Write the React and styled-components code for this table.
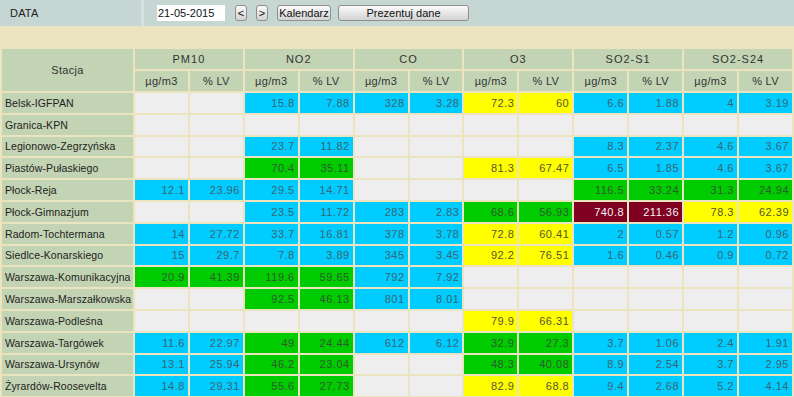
import React from "react";
import styled, { createGlobalStyle } from "styled-components";

const GlobalStyle = createGlobalStyle`
  html, body {
    margin: 0;
    padding: 0;
    background: #ece4bf;
    font-family: "Liberation Sans", Arial, sans-serif;
  }
`;

const TopBar = styled.div`
  display: flex;
  height: 26px;
  background-color: #c6d6d3;
`;
const LabelCell = styled.div`
  width: 144px;
  display: flex;
  align-items: center;
  padding-left: 10px;
  box-sizing: border-box;
  font-size: 11px;
  letter-spacing: 0.2px;
  color: #222;
  border-right: 3px solid #d6e2df;
`;
const ControlsCell = styled.div`
  display: flex;
  align-items: center;
  padding-left: 13px;
`;
const DateInput = styled.div`
  width: 68px;
  height: 16px;
  background: #fff;
  font-size: 11px;
  line-height: 16px;
  padding-left: 1px;
  box-sizing: border-box;
  color: #111;
  margin-right: 10px;
`;
const Button = styled.div`
  height: 16px;
  width: ${(p) => p.$w}px;
  box-sizing: border-box;
  border: 1px solid #8e8e8e;
  border-radius: 3px;
  background: linear-gradient(#fbfbfb, #e2e2e2 60%, #d4d4d4);
  font-size: 11px;
  line-height: 14px;
  text-align: center;
  color: #111;
  margin-right: ${(p) => p.$mr || 0}px;
`;
const Band = styled.div`
  height: 22px;
`;

const Table = styled.table`
  width: 794px;
  border-collapse: separate;
  border-spacing: 2px;
  margin-top: -1px;
  table-layout: fixed;
  font-size: 11px;
  letter-spacing: 0.3px;
`;
const HeadCell = styled.th`
  background-color: #c2d4b3;
  font-weight: normal;
  color: #333;
  height: 20px;
  padding: 0;
  text-align: center;
  letter-spacing: ${(p) => (p.$wide ? "1px" : "0.3px")};
`;
const NameCell = styled.td`
  background-color: #c2d4b3;
  color: #222;
  height: 19.8px;
  padding: 0 0 0 3px;
  white-space: nowrap;
  overflow: hidden;
  font-size: 10.5px;
  letter-spacing: 0.1px;
`;

const fills = {
  b: ["#00ccff", "#3d6471"],
  g: ["#00cc00", "#2f5a2f"],
  y: ["#ffff00", "#555532"],
  r: ["#800022", "#f4f4f4"],
  e: ["#eeeeee", "#333"],
};
const ValueCell = styled.td`
  background-color: ${(p) => fills[p.$lvl][0]};
  color: ${(p) => fills[p.$lvl][1]};
  text-align: right;
  padding: 0 3px 0 0;
  height: 19.8px;
  letter-spacing: 0.5px;
`;

const groups = ["PM10", "NO2", "CO", "O3", "SO2-S1", "SO2-S24"];

const rows = [
  ["Belsk-IGFPAN", [null, ["15.8", "7.88", "b"], ["328", "3.28", "b"], ["72.3", "60", "y"], ["6.6", "1.88", "b"], ["4", "3.19", "b"]]],
  ["Granica-KPN", [null, null, null, null, null, null]],
  ["Legionowo-Zegrzyńska", [null, ["23.7", "11.82", "b"], null, null, ["8.3", "2.37", "b"], ["4.6", "3.67", "b"]]],
  ["Piastów-Pułaskiego", [null, ["70.4", "35.11", "g"], null, ["81.3", "67.47", "y"], ["6.5", "1.85", "b"], ["4.6", "3.67", "b"]]],
  ["Płock-Reja", [["12.1", "23.96", "b"], ["29.5", "14.71", "b"], null, null, ["116.5", "33.24", "g"], ["31.3", "24.94", "g"]]],
  ["Płock-Gimnazjum", [null, ["23.5", "11.72", "b"], ["283", "2.83", "b"], ["68.6", "56.93", "g"], ["740.8", "211.36", "r"], ["78.3", "62.39", "y"]]],
  ["Radom-Tochtermana", [["14", "27.72", "b"], ["33.7", "16.81", "b"], ["378", "3.78", "b"], ["72.8", "60.41", "y"], ["2", "0.57", "b"], ["1.2", "0.96", "b"]]],
  ["Siedlce-Konarskiego", [["15", "29.7", "b"], ["7.8", "3.89", "b"], ["345", "3.45", "b"], ["92.2", "76.51", "y"], ["1.6", "0.46", "b"], ["0.9", "0.72", "b"]]],
  ["Warszawa-Komunikacyjna", [["20.9", "41.39", "g"], ["119.6", "59.65", "g"], ["792", "7.92", "b"], null, null, null]],
  ["Warszawa-Marszałkowska", [null, ["92.5", "46.13", "g"], ["801", "8.01", "b"], null, null, null]],
  ["Warszawa-Podleśna", [null, null, null, ["79.9", "66.31", "y"], null, null]],
  ["Warszawa-Targówek", [["11.6", "22.97", "b"], ["49", "24.44", "g"], ["612", "6.12", "b"], ["32.9", "27.3", "g"], ["3.7", "1.06", "b"], ["2.4", "1.91", "b"]]],
  ["Warszawa-Ursynów", [["13.1", "25.94", "b"], ["46.2", "23.04", "g"], null, ["48.3", "40.08", "g"], ["8.9", "2.54", "b"], ["3.7", "2.95", "b"]]],
  ["Żyrardów-Roosevelta", [["14.8", "29.31", "b"], ["55.6", "27.73", "g"], null, ["82.9", "68.8", "y"], ["9.4", "2.68", "b"], ["5.2", "4.14", "b"]]],
];

export default function App() {
  return (
    <>
      <GlobalStyle />
      <TopBar>
        <LabelCell>DATA</LabelCell>
        <ControlsCell>
          <DateInput>21-05-2015</DateInput>
          <Button $w={12} $mr={9}>&lt;</Button>
          <Button $w={12} $mr={9}>&gt;</Button>
          <Button $w={54} $mr={7}>Kalendarz</Button>
          <Button $w={131}>Prezentuj dane</Button>
        </ControlsCell>
      </TopBar>
      <Band />
      <Table>
        <colgroup>
          <col style={{ width: 131 }} />
          {Array.from({ length: 12 }).map((_, i) => (
            <col key={i} />
          ))}
        </colgroup>
        <thead>
          <tr>
            <HeadCell rowSpan={2}>Stacja</HeadCell>
            {groups.map((g) => (
              <HeadCell key={g} colSpan={2} $wide>
                {g}
              </HeadCell>
            ))}
          </tr>
          <tr>
            {groups.map((g) => (
              <React.Fragment key={g}>
                <HeadCell>µg/m3</HeadCell>
                <HeadCell>% LV</HeadCell>
              </React.Fragment>
            ))}
          </tr>
        </thead>
        <tbody>
          {rows.map(([name, vals]) => (
            <tr key={name}>
              <NameCell>{name}</NameCell>
              {vals.map((v, i) => (
                <React.Fragment key={i}>
                  <ValueCell $lvl={v ? v[2] : "e"}>{v ? v[0] : ""}</ValueCell>
                  <ValueCell $lvl={v ? v[2] : "e"}>{v ? v[1] : ""}</ValueCell>
                </React.Fragment>
              ))}
            </tr>
          ))}
        </tbody>
      </Table>
    </>
  );
}
